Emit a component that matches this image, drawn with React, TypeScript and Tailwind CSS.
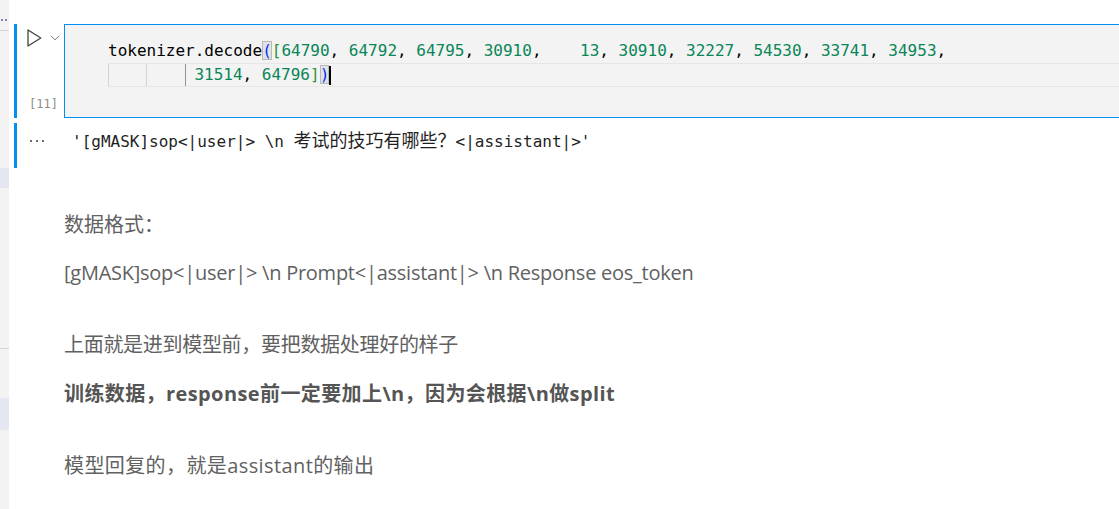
const mono = "font-['DejaVu_Sans_Mono','Noto_Sans_CJK_SC',monospace]";

function PlayIcon() {
  return (
    <svg width="15" height="18" viewBox="0 0 15 18" fill="none">
      <path d="M1 1 L13.8 9 L1 17 Z" stroke="#424242" strokeWidth="1.3" strokeLinejoin="round" />
    </svg>
  );
}

function Chevron() {
  return (
    <svg width="10" height="6" viewBox="0 0 10 6" fill="none">
      <path d="M0.8 0.8 L5 4.8 L9.2 0.8" stroke="#7a7a7a" strokeWidth="1" />
    </svg>
  );
}

function Num({ v }: { v: string }) {
  return <span className="text-[#098658]">{v}</span>;
}

export default function App() {
  const first = ["64790", "64792", "64795", "30910"];
  const rest = ["30910", "32227", "54530", "33741", "34953"];

  return (
    <div className="flex h-[509px] w-[1119px] overflow-hidden bg-white">
      {/* sidebar edge */}
      <aside className="flex w-[9px] shrink-0 flex-col bg-[#f3f3f3]">
        <div className="flex h-[31px] items-end gap-[2px] border-b border-[#d6d6d6] pb-[9px] pl-[1px]">
          <span className="h-[2px] w-[2px] bg-[#7b8aa8]" />
          <span className="h-[2px] w-[2px] bg-[#7b8aa8]" />
        </div>
        <div className="mt-[137px] h-[20px] bg-[#e4e6f2]" />
        <div className="mt-[160px] h-px bg-[#d6d6d6]" />
        <div className="mt-[49px] h-[32px] bg-[#e4e6f2]" />
      </aside>

      <main className="min-w-0 flex-1">
        {/* code cell */}
        <div className="mt-[24px] flex">
          <div className="ml-[5px] h-[94px] w-[3px] shrink-0 bg-[#0090f1]" />
          <div className="flex h-[94px] w-[47px] shrink-0 flex-col justify-between pb-[6px] pl-[10px] pt-[5px]">
            <div className="flex items-start gap-[8px]">
              <PlayIcon />
              <div className="pt-[6px]">
                <Chevron />
              </div>
            </div>
            <span className={`${mono} pl-[2px] text-[12px] leading-[15px] text-[#8e8e8e]`}>[11]</span>
          </div>
          <div className="-mr-[6px] h-[94px] flex-1 border border-[#0090f1] bg-[#f3f3f3] pl-[43px] pt-[14px]">
            <div className={`${mono} text-[16px] leading-[24px] whitespace-pre text-black`}>
              <div className="h-[24px]">
                <span>tokenizer.decode</span>
                <span className="bg-[#e2e2e2] text-[#0431fa] shadow-[inset_0_0_0_1px_#b9b9b9]">(</span>
                <span className="text-[#319331]">[</span>
                {first.map((n) => (
                  <span key={n}>
                    <Num v={n} />
                    {", "}
                  </span>
                ))}
                <span>{"   "}</span>
                <Num v="13" />
                {rest.map((n) => (
                  <span key={n}>
                    {", "}
                    <Num v={n} />
                  </span>
                ))}
                <span>,</span>
              </div>
              <div className="flex h-[24px] items-stretch border-y border-[#e6e6e6]">
                <span className="w-[38.4px] border-l border-[#d3d3d3]" />
                <span className="w-[38.4px] border-l border-[#d3d3d3]" />
                <span className="w-[9.6px] border-l border-[#939393]" />
                <span className="leading-[22px]">
                  <Num v="31514" />
                  {", "}
                  <Num v="64796" />
                  <span className="text-[#319331]">]</span>
                  <span className="bg-[#e2e2e2] text-[#0431fa] shadow-[inset_0_0_0_1px_#b9b9b9]">)</span>
                </span>
                <span className="mt-[2px] h-[19px] w-[2px] bg-black" />
              </div>
            </div>
          </div>
        </div>

        {/* output */}
        <div className="mt-[5px] flex">
          <div className="ml-[5px] h-[45px] w-[3px] shrink-0 bg-[#0090f1]" />
          <div className="flex w-[55px] shrink-0 gap-[4px] pl-[13px] pt-[17px]">
            <span className="h-[2px] w-[2px] bg-[#6b6b6b]" />
            <span className="h-[2px] w-[2px] bg-[#6b6b6b]" />
            <span className="h-[2px] w-[2px] bg-[#6b6b6b]" />
          </div>
          <div className={`${mono} pt-[6px] text-[16px] leading-[24px] whitespace-pre text-[#1f1f1f]`}>
            {"'[gMASK]sop<|user|> \\n "}
            <span className="text-[18px]">考试的技巧有哪些？</span>
            {"<|assistant|>'"}
          </div>
        </div>

        {/* markdown */}
        <div className="pl-[55px] font-['Open_Sans','Noto_Sans_CJK_SC',sans-serif] text-[20px] leading-[28px] text-[#616161]">
          <p className="mt-[43px]">数据格式：</p>
          <p className="mt-[20px] tracking-[-0.25px]">
            [gMASK]sop&lt;|user|&gt; \n Prompt&lt;|assistant|&gt; \n Response eos_token
          </p>
          <p className="mt-[44px] tracking-[-0.3px]">上面就是进到模型前，要把数据处理好的样子</p>
          <p className="mt-[21px] font-bold tracking-[0.4px] text-[#555555]">
            训练数据，response前一定要加上\n，因为会根据\n做split
          </p>
          <p className="mt-[44px] tracking-[0.4px]">模型回复的，就是assistant的输出</p>
        </div>
      </main>
    </div>
  );
}
